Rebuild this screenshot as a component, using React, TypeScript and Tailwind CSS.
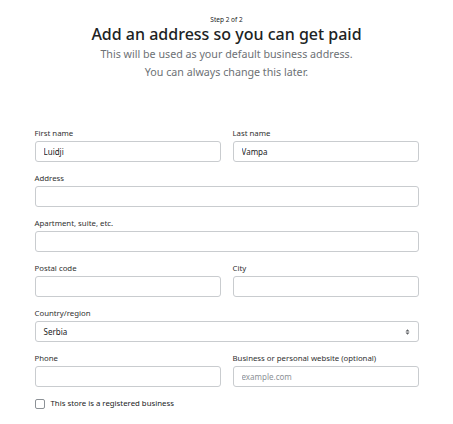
import React, { useState } from "react";

const Field: React.FC<{
  label: string;
  value?: string;
  placeholder?: string;
}> = ({ label, value, placeholder }) => {
  const [val, setVal] = useState(value ?? "");
  return (
    <div className="flex flex-col flex-1 min-w-0">
      <label className="text-[7.8px] leading-[10px] text-[#303030] mb-[3px]">
        {label}
      </label>
      <input
        type="text"
        value={val}
        placeholder={placeholder}
        onChange={(e) => setVal(e.target.value)}
        className="h-[21px] w-full rounded-[3px] border border-[#c9cccf] bg-white px-[8px] text-[8px] text-[#202223] placeholder:text-[#8c9196] outline-none"
      />
    </div>
  );
};

export default function App() {
  const [registered, setRegistered] = useState(false);

  return (
    <div
      className="w-[453px] h-[424px] bg-white overflow-hidden"
      style={{ fontFamily: '"Noto Sans", "Open Sans", sans-serif' }}
    >
      <div className="flex flex-col items-center pt-[15px]">
        <p className="text-[6.5px] leading-[9px] text-[#202223]">Step 2 of 2</p>
        <h1 className="text-[16px] leading-[21px] text-[#202223] font-medium">
          Add an address so you can get paid
        </h1>
        <p className="text-[10.7px] leading-[18px] text-[#6d7175] text-center">
          This will be used as your default business address.
          <br />
          You can always change this later.
        </p>
      </div>

      <form className="w-[384px] mx-auto mt-[47px] flex flex-col gap-[11px]">
        <div className="flex gap-[12px]">
          <Field label="First name" value="Luidji" />
          <Field label="Last name" value="Vampa" />
        </div>
        <Field label="Address" />
        <Field label="Apartment, suite, etc." />
        <div className="flex gap-[12px]">
          <Field label="Postal code" />
          <Field label="City" />
        </div>
        <div className="flex flex-col">
          <label className="text-[7.8px] leading-[10px] text-[#303030] mb-[3px]">
            Country/region
          </label>
          <div className="relative h-[21px] rounded-[3px] border border-[#c9cccf] bg-white flex items-center px-[8px]">
            <span className="text-[8px] text-[#202223]">Serbia</span>
            <svg
              className="absolute right-[8px] top-1/2 -translate-y-1/2"
              width="5"
              height="7"
              viewBox="0 0 5 7"
            >
              <path d="M0.5 3 L2.5 0.8 L4.5 3 Z" fill="#5c5f62" />
              <path d="M0.5 4 L2.5 6.2 L4.5 4 Z" fill="#5c5f62" />
            </svg>
          </div>
        </div>
        <div className="flex gap-[12px]">
          <Field label="Phone" />
          <Field
            label="Business or personal website (optional)"
            placeholder="example.com"
          />
        </div>
        <label className="flex items-center gap-[6px] cursor-pointer">
          <span
            onClick={() => setRegistered(!registered)}
            className="w-[10px] h-[10px] rounded-[2px] border border-[#8c9196] bg-white flex items-center justify-center"
          >
            {registered && (
              <svg width="7" height="7" viewBox="0 0 10 10">
                <path d="M2 5 L4 7 L8 3" stroke="#202223" strokeWidth="1.5" fill="none" />
              </svg>
            )}
          </span>
          <span className="text-[7.8px] text-[#202223]">
            This store is a registered business
          </span>
        </label>
      </form>
    </div>
  );
}
